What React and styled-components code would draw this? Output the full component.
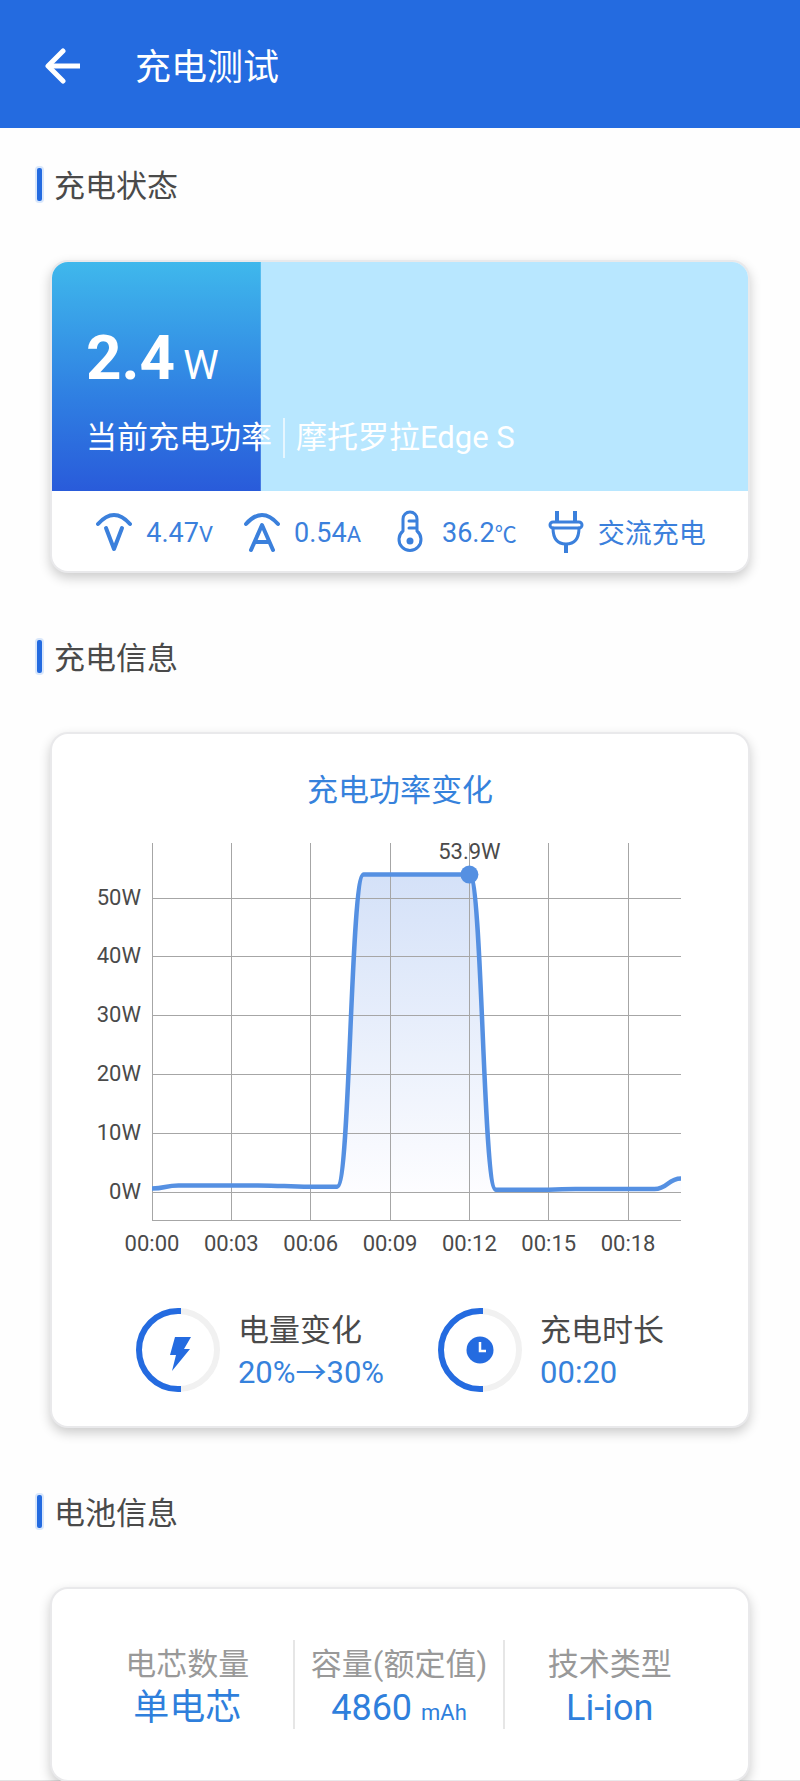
import React from "react";
import styled, { createGlobalStyle } from "styled-components";

const GlobalStyle = createGlobalStyle`
  *, *::before, *::after { box-sizing: border-box; }
  body {
    margin: 0;
    background: #fefefe;
    color: #4a4a4a;
    font-family: Roboto, "Noto Sans CJK SC", sans-serif;
    font-size: 31px;
    line-height: 40px;
  }
  h1, h2, h3, p, dl, dt, dd { margin: 0; font-weight: 400; font-size: inherit; }
`;

const Page = styled.div`
  border-bottom: 1px solid #e2e2e2;
`;

const Header = styled.header`
  display: flex;
  align-items: center;
  gap: 54px;
  height: 128px;
  padding: 4px 45px 0;
  background: #246be0;
  color: #fff;
`;

const BackButton = styled.button`
  display: flex;
  padding: 0;
  border: 0;
  background: none;
  color: inherit;
  cursor: pointer;
`;

const HeaderTitle = styled.h1`
  padding-top: 4px;
  font-size: 36px;
`;

const Main = styled.main`
  display: flex;
  flex-direction: column;
  gap: 66px;
  padding-top: 37px;
`;

const SectionTitle = styled.h2`
  display: flex;
  align-items: center;
  gap: 12px;
  margin: 0 37px 55px;
  padding-top: 2px;

  &::before {
    content: "";
    width: 5px;
    height: 33px;
    margin-bottom: 5px;
    border-radius: 2px;
    background: #246be0;
    box-shadow: 0 0 0 2px #d9e7fb;
  }
`;

const Card = styled.div`
  margin: 0 52px;
  border-radius: 16px;
  background: #fff;
  box-shadow: 0 0 0 2px #e9e9eb, 0 5px 12px 2px rgba(0, 0, 0, 0.2);
`;

const Hero = styled.div`
  padding: 60px 34px 33px;
  border-radius: 16px 16px 0 0;
  color: #fff;
  background:
    linear-gradient(#3fb8ec, #2f7ee2 60%, #295bda) 0 0 / ${(p) => p.$level}% 100% no-repeat,
    #b8e7ff;
`;

const Power = styled.p`
  font-size: 62px;
  font-weight: 700;
  line-height: 72px;
`;

const PowerUnit = styled.span`
  margin-left: 8px;
  font-size: 40px;
  font-weight: 400;
  line-height: 40px;
`;

const DeviceLine = styled.p`
  display: flex;
  align-items: center;
  gap: 11px;
  margin-top: 24px;
`;

const DeviceDivider = styled.span`
  width: 2px;
  height: 40px;
  background: #e6f6ff;
`;

const Stats = styled.div`
  display: flex;
  align-items: center;
  justify-content: center;
  gap: 31px;
  height: 80px;
  padding: 2px 0 0 2px;
  color: #3b80dc;
  font-size: 27px;
`;

const Stat = styled.div`
  display: flex;
  align-items: center;
  gap: 14px;
  white-space: nowrap;
`;

const StatText = styled.span`
  padding-top: 4px;
`;

const Unit = styled.span`
  font-size: 22px;
`;

const StatIcon = styled.svg`
  width: 36px;
  height: 44px;
  fill: none;
  stroke: #3b80dc;
  stroke-width: 4;
  stroke-linecap: round;
  stroke-linejoin: round;
`;

const ChartCard = styled(Card)`
  padding: 37px 0 34px;
`;

const ChartTitle = styled.h3`
  color: #3682dc;
  text-align: center;
`;

const ChartSvg = styled.svg`
  display: block;
  width: 100%;
  height: auto;

  text {
    fill: #4a4a4a;
    font-size: 22px;
  }
`;

const GridLine = styled.path`
  stroke: #a6a6a6;
  stroke-width: 1px;
  shape-rendering: crispEdges;
`;

const Gauges = styled.div`
  display: flex;
  justify-content: center;
  gap: 54px;
  margin-top: 48px;
`;

const Gauge = styled.div`
  display: flex;
  align-items: center;
  gap: 18px;
  height: 84px;
  white-space: nowrap;
`;

const GaugeText = styled.div`
  padding-top: 4px;
`;

const GaugeValue = styled.p`
  margin-top: 2px;
  color: #3682dc;
`;

const BatteryCard = styled(Card)`
  padding: 51px 34px 51px 30px;
`;

const Facts = styled.dl`
  display: grid;
  grid-template-columns: repeat(3, 1fr);
`;

const Fact = styled.div`
  padding-top: 5px;
  text-align: center;
  white-space: nowrap;

  & + & { border-left: 2px solid #e6e6e6; }
`;

const FactLabel = styled.dt`
  color: #999;
`;

const FactValue = styled.dd`
  height: 44px;
  padding-top: 3px;
  color: #2f7fdc;
  font-size: 36px;
`;

const stats = [
  {
    name: "电压", value: "4.47", unit: "V",
    icon: <><path d="M2 14Q18-4 34 14" /><path d="M10 18l8 21 8-21" /></>,
  },
  {
    name: "电流", value: "0.54", unit: "A",
    icon: <><path d="M2 14Q18-4 34 14" /><path d="M7 40l11-25 11 25M11 32h14" /></>,
  },
  {
    name: "温度", value: "36.2", unit: "℃",
    icon: (
      <>
        <path d="M11 21V9a7 7 0 0 1 14 0v12a11 11 0 1 1-14 0z" strokeWidth="3" />
        <path d="M17 11h7M17 18h7" strokeWidth="3" />
        <circle cx="18" cy="31" r="3.5" fill="#3b80dc" stroke="none" />
      </>
    ),
  },
  {
    name: "电源", value: "交流充电", unit: "",
    icon: (
      <>
        <path d="M9 1v11M27 1v11M18 34v9" strokeLinecap="butt" />
        <rect x="2" y="12" width="32" height="6" rx="3" strokeWidth="3" />
        <path d="M5 18c0 11 5 16 13 16s13-5 13-16" strokeWidth="3" />
      </>
    ),
  },
];

const samples = [
  0.6, 1.1, 1.1, 1.1, 1.1, 1, 0.9, 0.9, 53.9, 53.9, 53.9,
  53.9, 53.9, 0.4, 0.4, 0.4, 0.5, 0.5, 0.5, 0.5, 2.3,
];

const plot = { left: 100, right: 629, top: 33, bottom: 411, zero: 382 };
const xAt = (minute) => plot.left + (minute * (plot.right - plot.left)) / 20;
const yAt = (watts) => plot.zero - watts * 5.89;

const curve = samples.reduce((path, watts, i) => {
  if (i === 0) return `M${xAt(0)} ${yAt(watts)}`;
  const mid = xAt(i - 0.5);
  return `${path}C${mid} ${yAt(samples[i - 1])} ${mid} ${yAt(watts)} ${xAt(i)} ${yAt(watts)}`;
}, "");

function PowerChart() {
  return (
    <ChartSvg viewBox="0 1 696 449" role="img" aria-label="充电功率变化">
      <defs>
        <linearGradient id="area" x1="0" y1="0" x2="0" y2="1">
          <stop offset="0" stopColor="#d4e1f8" />
          <stop offset="1" stopColor="#fdfdff" />
        </linearGradient>
        <clipPath id="plot">
          <rect x={plot.left} y="0" width={plot.right - plot.left} height={plot.bottom} />
        </clipPath>
      </defs>
      <path d={`${curve}L${plot.right} ${plot.zero}H${plot.left}Z`} fill="url(#area)" />
      {[0, 10, 20, 30, 40, 50].map((w) => (
        <g key={w}>
          <GridLine d={`M${plot.left} ${Math.round(yAt(w)) + 0.5}H${plot.right}`} />
          <text x="89" y={Math.round(yAt(w)) + 7} textAnchor="end">{w}W</text>
        </g>
      ))}
      {[0, 3, 6, 9, 12, 15, 18].map((m) => (
        <g key={m}>
          <GridLine d={`M${Math.floor(xAt(m)) + 0.5} ${plot.top}V${plot.bottom}`} />
          <text x={xAt(m)} y="441" textAnchor="middle">{`00:${String(m).padStart(2, "0")}`}</text>
        </g>
      ))}
      <GridLine d={`M${plot.left} ${plot.bottom - 0.5}H${plot.right}`} />
      <path d={curve} clipPath="url(#plot)" fill="none" stroke="#5590e2" strokeWidth="4.5" />
      <circle cx={xAt(12)} cy={yAt(53.9)} r="9" fill="#5590e2" />
      <text x={xAt(12)} y="49" textAnchor="middle">53.9W</text>
    </ChartSvg>
  );
}

function Ring({ children }) {
  return (
    <svg width="84" height="84" viewBox="0 0 84 84" fill="none" aria-hidden="true">
      <circle cx="42" cy="42" r="39" stroke="#f1f1f1" strokeWidth="6" />
      <path d="M45 3h-3a39 39 0 0 0 0 78h3" stroke="#246be0" strokeWidth="6" />
      {children}
    </svg>
  );
}

export default function App() {
  return (
    <Page lang="zh-CN">
      <GlobalStyle />
      <Header>
        <BackButton type="button" aria-label="返回">
          <svg width="36" height="36" viewBox="0 0 36 36" fill="none" stroke="currentColor" strokeWidth="5">
            <path d="M35 18H4" />
            <path d="M18 3L3 18l15 15" strokeLinecap="round" strokeLinejoin="round" />
          </svg>
        </BackButton>
        <HeaderTitle>充电测试</HeaderTitle>
      </Header>
      <Main>
        <section>
          <SectionTitle>充电状态</SectionTitle>
          <Card>
            <Hero $level={30}>
              <Power>2.4<PowerUnit>W</PowerUnit></Power>
              <DeviceLine>
                <span>当前充电功率</span>
                <DeviceDivider />
                <span>摩托罗拉Edge S</span>
              </DeviceLine>
            </Hero>
            <Stats>
              {stats.map((s) => (
                <Stat key={s.name}>
                  <StatIcon viewBox="0 0 36 44" role="img" aria-label={s.name}>{s.icon}</StatIcon>
                  <StatText>{s.value}{s.unit && <Unit>{s.unit}</Unit>}</StatText>
                </Stat>
              ))}
            </Stats>
          </Card>
        </section>
        <section>
          <SectionTitle>充电信息</SectionTitle>
          <ChartCard>
            <ChartTitle>充电功率变化</ChartTitle>
            <PowerChart />
            <Gauges>
              <Gauge>
                <Ring>
                  <path d="M39 29h16l-7 12h6L36 63l4-16h-6z" fill="#246be0" />
                </Ring>
                <GaugeText>
                  <p>电量变化</p>
                  <GaugeValue>20%→30%</GaugeValue>
                </GaugeText>
              </Gauge>
              <Gauge>
                <Ring>
                  <circle cx="42" cy="42" r="13.5" fill="#246be0" />
                  <path d="M42 34v9h6" stroke="#fff" strokeWidth="2.5" />
                </Ring>
                <GaugeText>
                  <p>充电时长</p>
                  <GaugeValue>00:20</GaugeValue>
                </GaugeText>
              </Gauge>
            </Gauges>
          </ChartCard>
        </section>
        <section>
          <SectionTitle>电池信息</SectionTitle>
          <BatteryCard>
            <Facts>
              <Fact>
                <FactLabel>电芯数量</FactLabel>
                <FactValue>单电芯</FactValue>
              </Fact>
              <Fact>
                <FactLabel>容量(额定值)</FactLabel>
                <FactValue>4860 <Unit>mAh</Unit></FactValue>
              </Fact>
              <Fact>
                <FactLabel>技术类型</FactLabel>
                <FactValue>Li-ion</FactValue>
              </Fact>
            </Facts>
          </BatteryCard>
        </section>
      </Main>
    </Page>
  );
}
